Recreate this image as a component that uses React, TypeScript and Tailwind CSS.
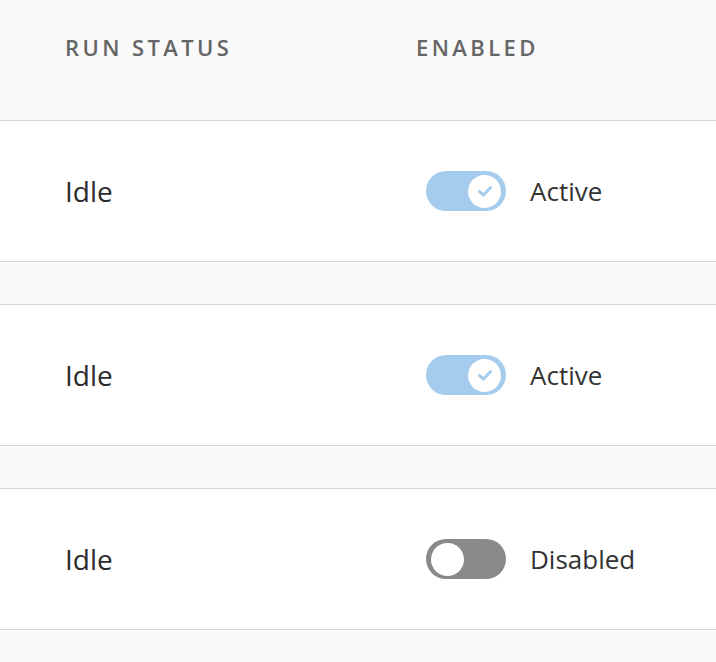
const rows = [
  { status: 'Idle', enabled: true },
  { status: 'Idle', enabled: true },
  { status: 'Idle', enabled: false },
]

function Toggle({ on }: { on: boolean }) {
  return (
    <div
      className={`flex h-[40px] w-[80px] items-center rounded-full px-[5px] ${
        on ? 'justify-end bg-[#a5cced]' : 'justify-start bg-[#8a8a8a]'
      }`}
    >
      <div className="flex h-[33px] w-[33px] items-center justify-center rounded-full bg-white">
        {on && (
          <svg width="20" height="20" viewBox="0 0 20 20" fill="none">
            <path
              d="M4.5 10.5 L8.5 14 L15.5 6.5"
              stroke="#a5cced"
              strokeWidth="3"
              strokeLinecap="round"
              strokeLinejoin="round"
            />
          </svg>
        )}
      </div>
    </div>
  )
}

export default function App() {
  return (
    <div className="min-h-[662px] w-[716px] bg-[#fafafa] font-['Open_Sans',sans-serif]">
      <div className="flex h-[121px] border-b border-[#d6d6d6] pl-[65px] pt-[32px]">
        <div className="w-[351px] text-[22px] font-semibold uppercase leading-[30px] tracking-[3.4px] text-[#666]">
          Run Status
        </div>
        <div className="text-[22px] font-semibold uppercase leading-[30px] tracking-[3.4px] text-[#666]">
          Enabled
        </div>
      </div>

      {rows.map((row, i) => (
        <div key={i}>
          <div className="flex h-[141px] items-center border-b border-[#d6d6d6] bg-white pl-[65px]">
            <div className="w-[351px] text-[28px] leading-[36px] text-[#2b2b2b]">{row.status}</div>
            <div className="ml-[10px] flex items-center gap-[24px]">
              <Toggle on={row.enabled} />
              <span className="text-[26px] leading-[36px] text-[#333]">
                {row.enabled ? 'Active' : 'Disabled'}
              </span>
            </div>
          </div>
          <div className="h-[43px] border-b border-[#d6d6d6]" />
        </div>
      ))}
    </div>
  )
}
